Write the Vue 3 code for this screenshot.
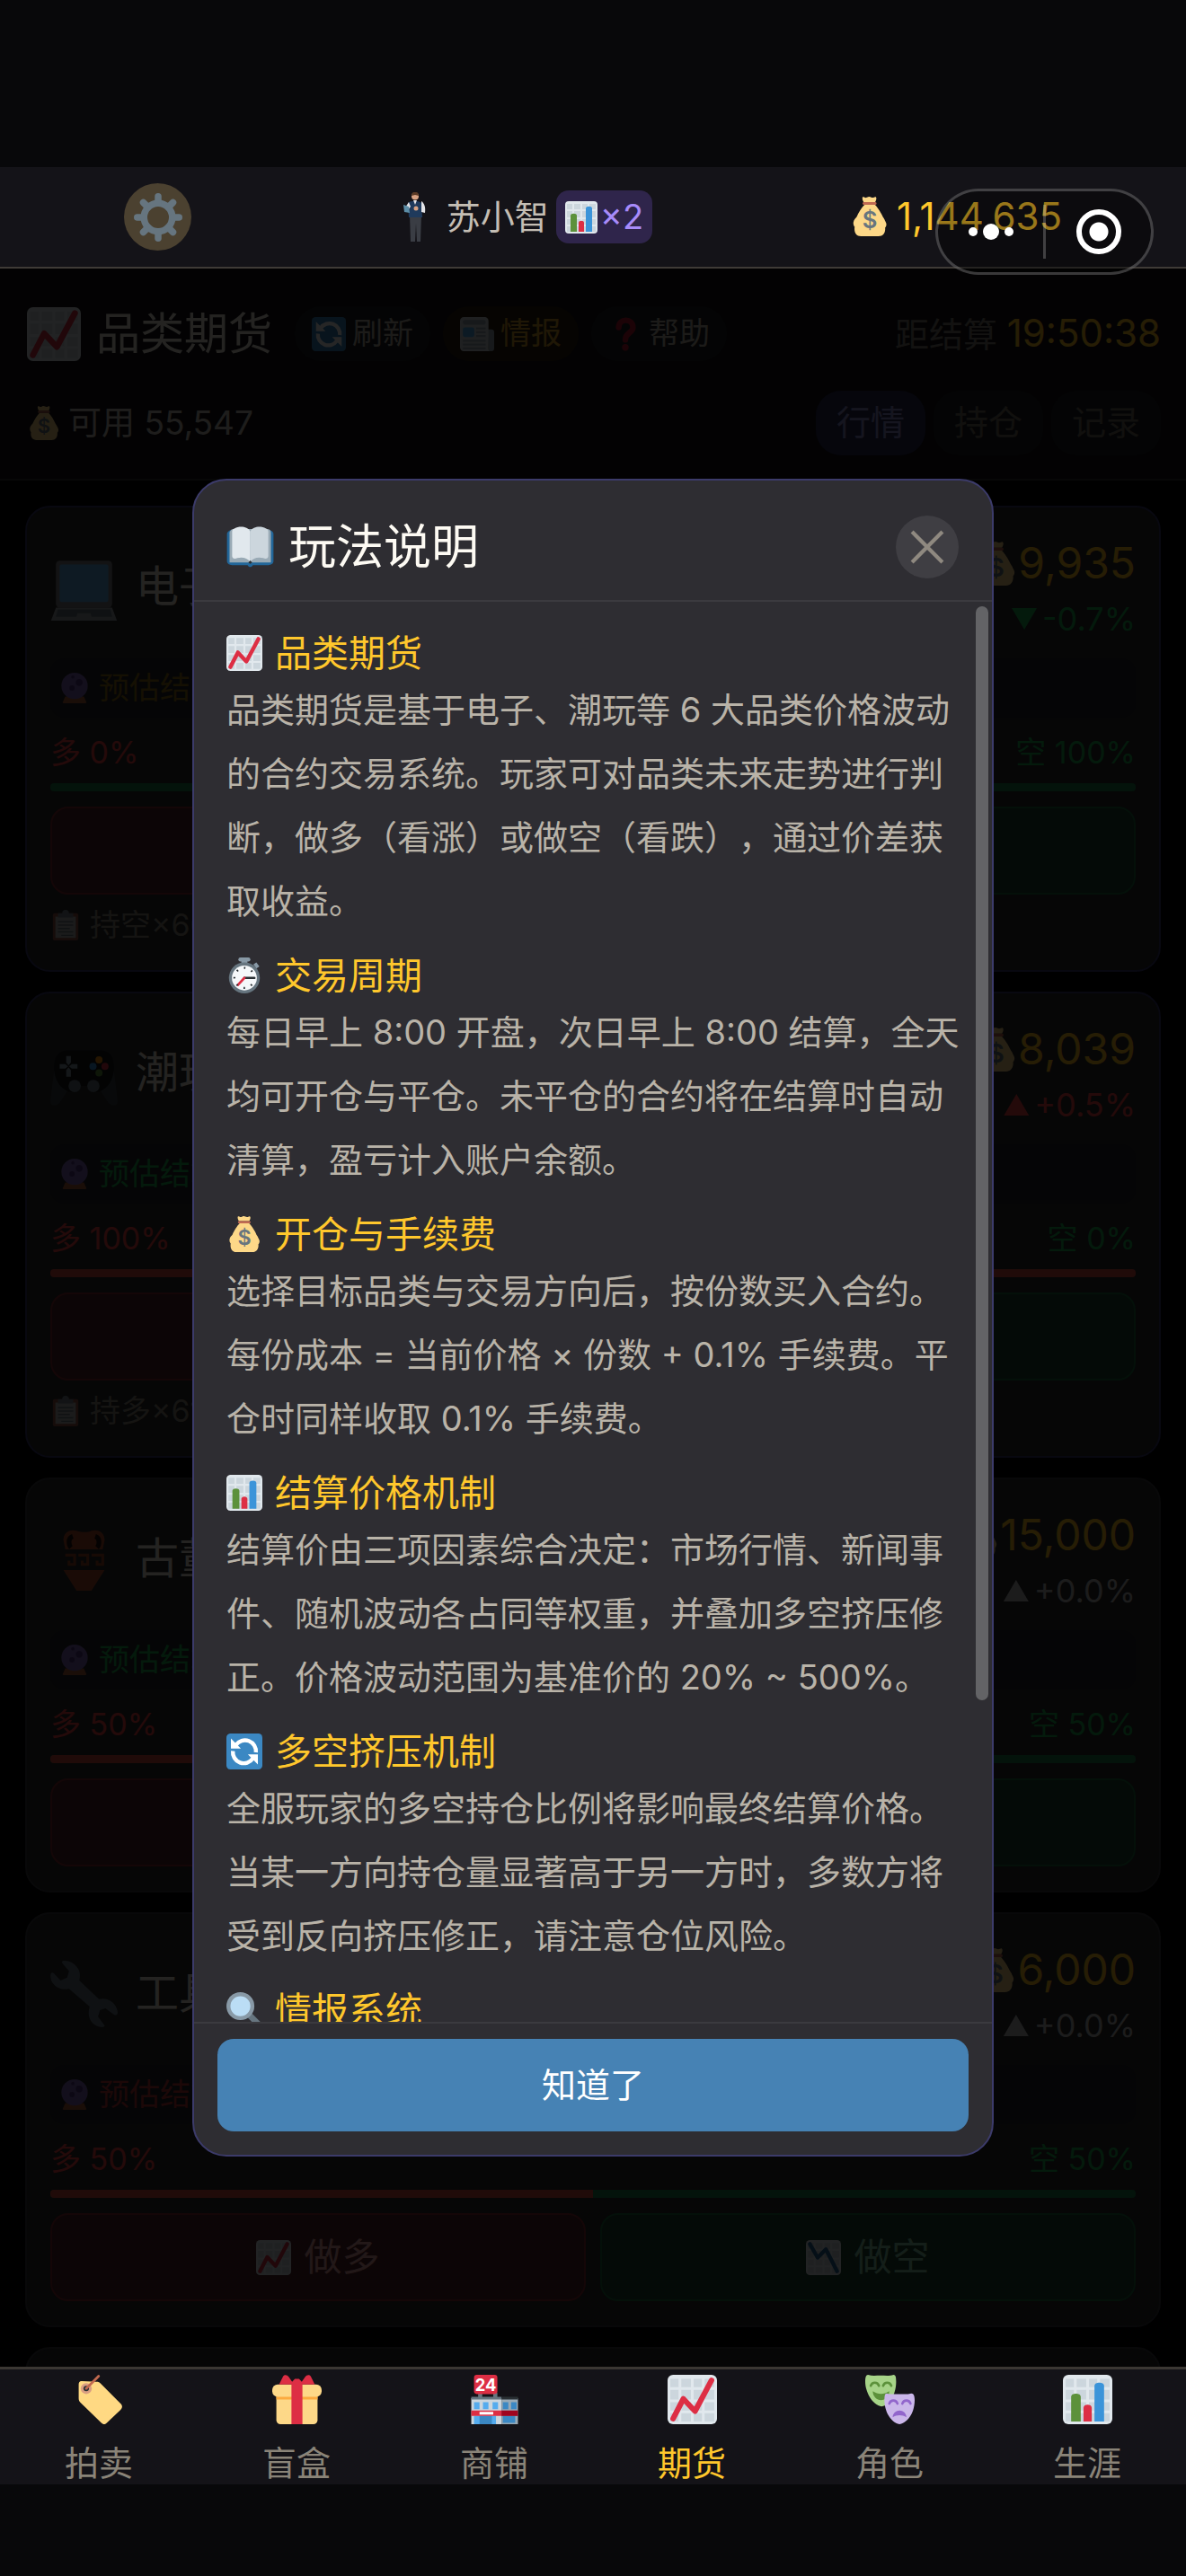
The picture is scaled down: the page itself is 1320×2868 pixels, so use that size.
<script setup>
import { ref } from 'vue'

const topActions = [
   { icon: 'refresh', label: '刷新', hot: false },
   { icon: 'news', label: '情报', hot: true },
   { icon: 'question', label: '帮助', hot: false },
]

const views = ['行情', '持仓', '记录']
const activeView = ref('行情')

// trend: up | down | flat, hint: colour of the forecast line
const contracts = [
   { name: '电子', icon: 'laptop', price: '9,935', trend: 'down', change: '-0.7%', hint: 'warn', long: 0, holding: '持空×60' },
   { name: '潮玩', icon: 'gamepad', price: '8,039', trend: 'up', change: '+0.5%', hint: 'down', long: 100, holding: '持多×61' },
   { name: '古董', icon: 'amphora', price: '15,000', trend: 'flat', change: '+0.0%', hint: 'down', long: 50, holding: '' },
   { name: '工具', icon: 'wrench', price: '6,000', trend: 'flat', change: '+0.0%', hint: 'up', long: 50, holding: '' },
]

const rules = [
   { icon: 'chart-up', title: '品类期货', text: '品类期货是基于电子、潮玩等 6 大品类价格波动的合约交易系统。玩家可对品类未来走势进行判断，做多（看涨）或做空（看跌），通过价差获取收益。' },
   { icon: 'stopwatch', title: '交易周期', text: '每日早上 8:00 开盘，次日早上 8:00 结算，全天均可开仓与平仓。未平仓的合约将在结算时自动清算，盈亏计入账户余额。' },
   { icon: 'bag', title: '开仓与手续费', text: '选择目标品类与交易方向后，按份数买入合约。每份成本 = 当前价格 × 份数 + 0.1% 手续费。平仓时同样收取 0.1% 手续费。' },
   { icon: 'bars', title: '结算价格机制', text: '结算价由三项因素综合决定：市场行情、新闻事件、随机波动各占同等权重，并叠加多空挤压修正。价格波动范围为基准价的 20% ~ 500%。' },
   { icon: 'refresh', title: '多空挤压机制', text: '全服玩家的多空持仓比例将影响最终结算价格。当某一方向持仓量显著高于另一方时，多数方将受到反向挤压修正，请注意仓位风险。' },
   { icon: 'magnifier', title: '情报系统', text: '' },
]

const tabs = [
   { icon: 'tag', label: '拍卖' },
   { icon: 'gift', label: '盲盒' },
   { icon: 'store', label: '商铺' },
   { icon: 'chart-up', label: '期货' },
   { icon: 'masks', label: '角色' },
   { icon: 'bars', label: '生涯' },
]
const activeTab = ref('期货')

const helpOpen = ref(true)
</script>

<template>
   <!-- icon sprite -->
   <svg class="sprite" aria-hidden="true">
      <symbol id="chart-up" viewBox="0 0 36 36">
         <rect width="36" height="36" rx="4" fill="#e1e8ed" />
         <path fill="#ccd6dd" d="M2 3h6v6H2zM10 3h7v6h-7zM19 3h6v6h-6zM27 3h7v6h-7zM2 11h6v7H2zM10 11h7v7h-7zM19 11h6v7h-6zM27 11h7v7h-7zM2 20h6v6H2zM10 20h7v6h-7zM19 20h6v6h-6zM27 20h7v6h-7zM2 28h6v6H2zM10 28h7v6h-7zM19 28h6v6h-6zM27 28h7v6h-7z" />
         <path d="M4 32 11.500 17.500 20 26.500 32 4" fill="none" stroke="#dd2e44" stroke-width="4" stroke-linecap="round" stroke-linejoin="round" />
      </symbol>
      <symbol id="chart-down" viewBox="0 0 36 36">
         <rect width="36" height="36" rx="4" fill="#e1e8ed" />
         <path fill="#ccd6dd" d="M2 3h6v6H2zM10 3h7v6h-7zM19 3h6v6h-6zM27 3h7v6h-7zM2 11h6v7H2zM10 11h7v7h-7zM19 11h6v7h-6zM27 11h7v7h-7zM2 20h6v6H2zM10 20h7v6h-7zM19 20h6v6h-6zM27 20h7v6h-7zM2 28h6v6H2zM10 28h7v6h-7zM19 28h6v6h-6zM27 28h7v6h-7z" />
         <path d="M4 4 12 18 20.500 9.500 32 32" fill="none" stroke="#226699" stroke-width="4" stroke-linecap="round" stroke-linejoin="round" />
      </symbol>
      <symbol id="bars" viewBox="0 0 36 36">
         <rect width="36" height="36" rx="4" fill="#e1e8ed" />
         <path fill="#ccd6dd" d="M2 3h6v6H2zM10 3h7v6h-7zM19 3h6v6h-6zM27 3h7v6h-7zM2 11h6v7H2zM10 11h7v7h-7zM19 11h6v7h-6zM27 11h7v7h-7zM2 20h6v6H2zM10 20h7v6h-7zM19 20h6v6h-6zM27 20h7v6h-7zM2 28h6v6H2zM10 28h7v6h-7zM19 28h6v6h-6zM27 28h7v6h-7z" />
         <path fill="#5c913b" d="M6 34V16c0-3 7-3 7 0v18z" />
         <path fill="#dd2e44" d="M15 34V24c0-3 6-3 6 0v10z" />
         <path fill="#3b94d9" d="M23 34V8c0-3 7-3 7 0v26z" />
      </symbol>
      <symbol id="bag" viewBox="0 0 36 36">
         <path fill="#fdd888" d="M31.900 21.900c-.4-1.500-1.200-2.400-1.800-3.300-1.500-3.500-4.600-8.700-7.300-11.300H13.300C10.600 9.900 7.600 14.900 6.100 18.400c-.6 1-2.700 2.200-3 5.100-.2 2.300.9 3.500 1.200 4-.8 4.500 1.100 8.500 5.700 8.500h16c4.500 0 6.500-3.600 6-7.800.5-.5 1.700-2.100.9-4.300-.3-.9-.8-1.600-1-2zM12.500 5c-1-1.500-1.700-4-.8-4.700 1.500-.6 1.700.9 3 .6 1.300-.2 1.300-.9 2.700-.9s1.900.9 3.200.9S22.500-.2 23.500.3c1.100.9.300 3.200-.6 4.700z" />
         <path fill="#bf6952" d="M12.500 4.900h10.700c1.300 0 1.300 2.400 0 2.400H12.500c-1.300 0-1.300-2.400 0-2.400z" />
         <text x="18" y="28.500" font-size="21" font-weight="600" text-anchor="middle" fill="#67757f">$</text>
      </symbol>
      <symbol id="refresh" viewBox="0 0 36 36">
         <rect width="36" height="36" rx="4" fill="#3b88c3" />
         <path d="M9.500 11.500A11 11 0 0 1 29.500 19M26.500 25A11 11 0 0 1 6.500 17.500" fill="none" stroke="#fff" stroke-width="4" />
         <path fill="#fff" d="M4.500 5v10h10zM31.500 31V21h-10z" />
      </symbol>
      <symbol id="news" viewBox="0 0 36 36">
         <path fill="#99aab5" d="M29 13h4a3 3 0 0 1 3 3v17a3 3 0 0 1-6 0z" />
         <path fill="#ccd6dd" d="M4 0h22a4 4 0 0 1 4 4v29a3 3 0 0 0 3 3H4a4 4 0 0 1-4-4V4a4 4 0 0 1 4-4z" />
         <rect x="3" y="3" width="24" height="5" rx="2" fill="#99aab5" />
         <rect x="3" y="11" width="12" height="10" rx="2" fill="#55acee" />
         <path d="M17 12h10M17 16h10M17 20h10M3 25h24M3 29h24M3 33h24" stroke="#99aab5" stroke-width="2" />
      </symbol>
      <symbol id="question" viewBox="0 0 36 36">
         <path d="M11 11c0-10 15-10 15 0 0 6-8 5-8 13" fill="none" stroke="#be1931" stroke-width="6" stroke-linecap="round" />
         <circle cx="18" cy="32" r="3.500" fill="#be1931" />
      </symbol>
      <symbol id="laptop" viewBox="0 0 36 36">
         <rect x="3" y="4" width="30" height="25" rx="2" fill="#808285" />
         <rect x="5" y="6" width="26" height="20" rx="1" fill="#5dadec" />
         <path fill="#99a0a6" d="M3 29h30l3 8H0z" />
         <path fill="#66757f" d="M4 30h28l1 4H3z" />
         <path fill="#99a0a6" d="M14.500 32h7l1 4h-9zM0 37h36v2H0z" />
      </symbol>
      <symbol id="gamepad" viewBox="0 0 36 36">
         <path fill="#3b4045" d="M2 17 0 33c0 3 3 3 5 1l6-9zM34 17l2 16c0 3-3 3-5 1l-6-9z" />
         <path fill="#14171a" d="M9 6h18c5 0 7 4 7 9s-2 10-6 12c-3 2-6 2-8-2h-4c-2 4-5 4-8 2-4-2-6-7-6-12s2-9 7-9z" />
         <path fill="#8899a6" d="M8.500 9h2.500v3.500L9.700 14l-1.200-1.500zM8.500 20H11v-3.500L9.700 15l-1.200 1.500zM5 13.300h3l1.500 1.200L8 15.700H5zM14.500 13.300h-3L10 14.500l1.500 1.200h3z" />
         <circle cx="13" cy="25" r="3.300" fill="#66757f" /><circle cx="23" cy="25" r="3.300" fill="#66757f" />
         <circle cx="26" cy="11" r="1.900" fill="#f4900c" /><circle cx="29.200" cy="14.500" r="1.900" fill="#dd2e44" />
         <circle cx="22.800" cy="14.500" r="1.900" fill="#3b94d9" /><circle cx="26" cy="18" r="1.900" fill="#5c913b" />
      </symbol>
      <symbol id="amphora" viewBox="0 0 36 36">
         <path fill="#ae4e2a" d="M14 3c3 1 6 1 8 0 4-1 7 1 7 5l-1 5H8L7 8c0-4 3-6 7-5zM7 24h22l-7 11h-8z" />
         <path d="M12 6c-3 1-2 5-1 6M24 6c3 1 2 5 1 6" fill="none" stroke="#1c1210" stroke-width="2.500" />
         <path d="M8 16h5v5h-3v-2M15 16h5v5h-3v-2M22 16h6v5h-3v-2" fill="none" stroke="#9a4525" stroke-width="1.500" />
      </symbol>
      <symbol id="wrench" viewBox="0 0 36 36">
         <path fill="#66757f" d="M7 .5C10 0 14 2 15.500 6c.5 2 .3 3.500 0 5l10.500 10c4-1 8 1 9.500 5 .6 1.700.6 2.500.2 3.200-.5.600-1.500.3-2.200-.3l-4-3-3 1-1 3.500 3 4c1 1 .5 1.600-1 1.600-4-.3-7-3.500-7-7.500 0-1.500.3-2.500.5-3.500L10 15.500c-4 1-8-1-9.500-4.500C0 9.300 0 8 .3 7.300c.3-.7 1-.6 1.700 0L5.500 11 9 9.500 10 6 7 2.500C6 1.500 6 .8 7 .5z" />
      </symbol>
      <symbol id="crystal" viewBox="0 0 36 36">
         <path fill="#ae5f3a" d="M7 28h22l3 7c0 1-1 1-2 1H6c-1 0-2 0-2-1z" />
         <circle cx="18" cy="15.500" r="15.500" fill="#8168b8" />
         <circle cx="23.500" cy="11.500" r="4" fill="#553986" /><circle cx="15" cy="18" r="3.200" fill="#553986" /><circle cx="16" cy="5" r="2" fill="#553986" />
      </symbol>
      <symbol id="clipboard" viewBox="0 0 36 36">
         <rect x="3" y="4" width="30" height="32" rx="2" fill="#c1694f" />
         <path fill="#f0f0ee" d="M6 8h24v25H6z" />
         <path fill="#99aab5" d="M9 4h5a4 4 0 0 1 8 0h5v5H9z" />
         <path d="M9 14h18M9 18h18M9 22h14M9 26h18M13 30h14" stroke="#8899a6" stroke-width="1.500" />
      </symbol>
      <symbol id="book" viewBox="0 0 36 32">
         <path fill="#226699" d="M0 6c0-2 2-3 4-3h28c2 0 4 1 4 3v21c0 2-2 3-4 3H20c-1 2-3 2-4 0H4c-2 0-4-1-4-3z" />
         <path fill="#99aab5" d="M2 5c0-2 2-3 3-3h26c2 0 3 1 3 3v23H2z" />
         <path fill="#e1e8ed" d="M18 4C16-.5 9-.3 6 1.500 4.500 2 4 3 4 4v19c0 2 2 2.500 4 1.500 4-1 8 0 10 3z" />
         <path fill="#ccd6dd" d="M18 4c2-4.500 9-4.300 12-2.500 1.500.5 2 1.500 2 2.500v19c0 2-2 2.500-4 1.500-4-1-8 0-10 3z" />
         <path fill="#292f33" d="m16.500 28 1.500-1.500 1.500 1.500-1.500 1z" />
      </symbol>
      <symbol id="stopwatch" viewBox="0 0 36 36">
         <path fill="#8899a6" d="M15 3h6v5h-6zM27 7l3-2 3 4-3 2z" />
         <rect x="12" width="12" height="4" rx="2" fill="#8899a6" />
         <circle cx="18" cy="20.500" r="15.500" fill="#66757f" />
         <circle cx="18" cy="20.500" r="12.500" fill="#f5f8fa" />
         <path d="M18 20.500h10" stroke="#292f33" stroke-width="2.200" stroke-linecap="round" />
         <path d="m18 20.500-6.500 7" stroke="#dd2e44" stroke-width="2.400" stroke-linecap="round" />
         <circle cx="18" cy="20.500" r="10" fill="none" stroke="#292f33" stroke-width="2" stroke-dasharray="1.500 6.354" stroke-dashoffset=".75" />
      </symbol>
      <symbol id="magnifier" viewBox="0 0 36 36">
         <path d="m24 24 9 9" stroke="#66757f" stroke-width="6" stroke-linecap="round" />
         <circle cx="14" cy="14" r="12" fill="#bbddf5" stroke="#8899a6" stroke-width="4" />
      </symbol>
      <symbol id="tag" viewBox="0 0 36 36">
         <path fill="#ffd983" d="M3 7c0-1.500.7-2.500 2-2.500L16 5c1.500 0 2 .3 3 1.300L33.500 21c1.500 1.500 1.500 3 0 4.500L23.500 35c-1.500 1.500-2.500 1.300-4 0L4.500 20.500C3.300 19.300 3 18.500 3 17z" />
         <circle cx="8.500" cy="10" r="4" fill="#d99e82" /><circle cx="8.500" cy="10" r="2" fill="#292f33" />
         <path d="m8.500 10 9-9" stroke="#c1694f" stroke-width="1.800" stroke-linecap="round" />
      </symbol>
      <symbol id="gift" viewBox="0 0 36 36">
         <path fill="#fdd888" d="M3 14h30v19a3 3 0 0 1-3 3H6a3 3 0 0 1-3-3z" />
         <path fill="#fcab40" d="M3 15h30v3H3z" />
         <rect y="7" width="36" height="9" rx="4" fill="#fdd888" />
         <path fill="#dd2e44" d="M14 7h8v29h-8zM5 7l3-6c1-1.500 3-1 4 .5L14.500 5l2-2h3l2 2L24 1.500C25 0 27-.5 28 1l3 6z" />
      </symbol>
      <symbol id="store" viewBox="0 0 36 36">
         <path fill="#66757f" d="M6 13h3v5H6zM17 13h3v5h-3z" />
         <rect x="3" width="17" height="14" rx="2" fill="#dd2e44" />
         <text x="11.500" y="11.500" font-size="12" font-weight="700" text-anchor="middle" fill="#fff">24</text>
         <path fill="#ccd6dd" d="M1 17h22v19H1z" /><path fill="#99aab5" d="M23 17h12v19H23z" />
         <path fill="#66757f" d="M1 16h22v2H1z" /><path fill="#292f33" d="M23 16h12v2H23z" />
         <path fill="#55acee" d="M3 20h4v5H3zM9.500 20h4v5h-4zM16.500 20h4v5h-4zM3 30h16v6H3z" />
         <path fill="#3b88c3" d="M7 30h9v6H7zM24 20h4v5h-4zM30 20h4v5h-4zM24 30h9v5h-9z" />
         <path fill="#dd2e44" d="M1 26h22v4H1z" /><path fill="#a0041e" d="M23 26h12v4H23z" />
         <rect x="7" y="27" width="10" height="2" fill="#fff" />
      </symbol>
      <symbol id="masks" viewBox="0 0 36 36">
         <path fill="#a6d388" d="M2 0c3 1 6 .5 9 .5S18 1 20.500 0c1.800 0 2 2 2 5 0 8-4 17-10.500 18C5 22 0 12 0 5c0-3 .5-5 2-5z" />
         <path d="M4 8c1-3 5-3 6 0M13 8c1-3 5-3 6 0" fill="none" stroke="#5c913b" stroke-width="1.700" stroke-linecap="round" />
         <path fill="#5c913b" d="M5.500 12c4 2.500 8 2.500 12 0 0 4-3 6.500-6 6.500s-6-2.500-6-6.500z" />
         <path fill="#cbb7ea" d="M15.500 13.500c3 1 6 .5 9 .5s6 .5 9-.5c2 0 2.500 2 2.500 5 0 8-4 16-11 17.500C18 34.500 14 26 14 18.500c0-3 .3-5 1.500-5z" />
         <path d="M17.500 21c1-3 5-3 6 0M27 21c1-3 5-3 6 0" fill="none" stroke="#9266cc" stroke-width="1.700" stroke-linecap="round" />
         <path fill="#9266cc" d="M20 31c0-3 2.500-5 5-5s5 2 5 5c-3-2-7-2-10 0z" />
      </symbol>
      <symbol id="gear" viewBox="0 0 36 36">
         <circle cx="18" cy="18" r="10.500" fill="none" stroke="#66757f" stroke-width="5" />
         <path d="M18 2.500V7M18 29v4.500M2.500 18H7M29 18h4.500M7 7l3.500 3.500M25.500 25.500 29 29M29 7l-3.500 3.500M10.500 25.500 7 29" stroke="#66757f" stroke-width="5" stroke-linecap="round" />
      </symbol>
      <symbol id="player" viewBox="0 0 56 56">
         <path fill="#3a3d44" d="m23 26 13 0-1 29h-4l-1-20-1 20h-5z" />
         <path fill="#1f3a5c" d="M21 12c3-3 12-3 15 0l1 16H22z" />
         <path fill="#e4e4e8" d="M36 10c3 2 5 6 4 13l-4-1zM22 11l-4 6 3 3 3-4zM27 9h4l-2 5z" />
         <circle cx="29" cy="4.500" r="4" fill="#d8a384" /><path fill="#5a3a26" d="M25 4c0-6 8-6 8 0l-4-1z" />
         <path fill="#5c8da6" d="m16 14 6 2 1 7-6-1z" /><circle cx="30" cy="18" r="2.500" fill="#d8a384" />
      </symbol>
   </svg>

   <div class="app">
      <header class="status">
         <button class="settings" aria-label="设置"><svg><use href="#gear" /></svg></button>
         <div class="player">
            <svg class="avatar"><use href="#player" /></svg>
            <span>苏小智</span>
            <span class="boost"><svg><use href="#bars" /></svg>×2</span>
         </div>
         <div class="coins"><svg><use href="#bag" /></svg>1,144,635</div>

         <!-- host app capsule, floats over the coin balance -->
         <div class="capsule">
            <button class="capsule-more" aria-label="更多"><i /><i /><i /></button>
            <button class="capsule-close" aria-label="关闭"><i /></button>
         </div>
      </header>

      <main class="market">
         <section class="market-head">
            <div class="head-row">
               <div class="head-left">
                  <svg class="head-icon"><use href="#chart-up" /></svg>
                  <h1>品类期货</h1>
                  <div class="pills">
                     <button v-for="a in topActions" :key="a.label" class="pill" :class="{ hot: a.hot }">
                        <svg><use :href="`#${a.icon}`" /></svg>{{ a.label }}
                     </button>
                  </div>
               </div>
               <div class="countdown">距结算 <b>19:50:38</b></div>
            </div>
            <div class="head-row">
               <div class="available"><svg><use href="#bag" /></svg>可用 55,547</div>
               <div class="views">
                  <button
                     v-for="v in views"
                     :key="v"
                     class="view"
                     :class="{ active: v === activeView }"
                     @click="activeView = v"
                  >{{ v }}</button>
               </div>
            </div>
         </section>

         <section class="list">
            <article v-for="c in contracts" :key="c.name" class="card" :class="{ held: c.holding }">
               <div class="card-top">
                  <svg class="card-icon"><use :href="`#${c.icon}`" /></svg>
                  <h2>{{ c.name }}</h2>
                  <div class="quote">
                     <div class="price"><svg><use href="#bag" /></svg>{{ c.price }}</div>
                     <div class="change" :class="c.trend"><i />{{ c.change }}</div>
                  </div>
               </div>
               <div class="forecast" :class="c.hint"><svg><use href="#crystal" /></svg>预估结算</div>
               <div class="ratio">
                  <span class="up">多 {{ c.long }}%</span>
                  <span class="down">空 {{ 100 - c.long }}%</span>
               </div>
               <div class="ratio-bar"><i :style="{ width: c.long + '%' }" /></div>
               <div class="trade">
                  <button class="buy"><svg><use href="#chart-up" /></svg>做多</button>
                  <button class="sell"><svg><use href="#chart-down" /></svg>做空</button>
               </div>
               <div v-if="c.holding" class="holding"><svg><use href="#clipboard" /></svg>{{ c.holding }}</div>
            </article>
            <article class="card next" />
         </section>

         <!-- help dialog -->
         <div v-if="helpOpen" class="overlay">
            <div class="dialog" role="dialog" aria-labelledby="help-title">
               <div class="dialog-head">
                  <svg class="dialog-icon"><use href="#book" /></svg>
                  <h2 id="help-title">玩法说明</h2>
                  <button class="close" aria-label="关闭" @click="helpOpen = false">
                     <svg viewBox="0 0 36 36"><path d="m2 2 32 32M34 2 2 34" /></svg>
                  </button>
               </div>
               <div class="dialog-body">
                  <section v-for="r in rules" :key="r.title" class="rule">
                     <h3><svg><use :href="`#${r.icon}`" /></svg>{{ r.title }}</h3>
                     <p v-if="r.text">{{ r.text }}</p>
                  </section>
                  <div class="thumb" />
               </div>
               <div class="dialog-foot">
                  <button class="confirm" @click="helpOpen = false">知道了</button>
               </div>
            </div>
         </div>
      </main>

      <nav class="tabs">
         <a
            v-for="t in tabs"
            :key="t.label"
            href="#"
            :class="{ active: t.label === activeTab }"
            @click.prevent="activeTab = t.label"
         >
            <svg><use :href="`#${t.icon}`" /></svg>
            {{ t.label }}
         </a>
      </nav>
   </div>
</template>

<style>
body {
   margin: 0;
   background: #08080a;
}
</style>

<style scoped>
.sprite {
   position: absolute;
   width: 0;
   height: 0;
}

.app {
   box-sizing: border-box;
   height: 100vh;
   padding: 186px 0 102px;
   display: flex;
   flex-direction: column;
   font-family: Inter, "Noto Sans CJK SC", sans-serif;
   font-size: 38px;
   line-height: 1.2;
   color: #c4beb4;
   text-spacing-trim: space-all;
}

.app * {
   box-sizing: border-box;
}

h1, h2, h3, p {
   margin: 0;
   font-weight: 400;
}

button {
   font: inherit;
   color: inherit;
   border: none;
   padding: 0;
   cursor: pointer;
}

svg {
   flex-shrink: 0;
}

/* ── Status bar ── */
.status {
   position: relative;
   z-index: 2;
   flex-shrink: 0;
   height: 113px;
   padding: 0 138px;
   display: flex;
   align-items: center;
   justify-content: space-between;
   background: #141318;
   border-bottom: 2px solid #3f3b37;
}

.settings {
   width: 75px;
   height: 75px;
   border-radius: 50%;
   background: #4b4130;
   display: flex;
   align-items: center;
   justify-content: center;
}

.settings svg {
   width: 54px;
   height: 54px;
}

.player {
   display: flex;
   align-items: center;
   gap: 8px;
}

.avatar {
   width: 56px;
   height: 56px;
}

.boost {
   display: flex;
   align-items: center;
   gap: 3px;
   height: 59px;
   padding: 0 10px;
   border-radius: 14px;
   background: #2f254b;
   color: #a78bfa;
}

.boost svg {
   width: 36px;
   height: 36px;
}

.coins {
   display: flex;
   align-items: center;
   gap: 8px;
   font-size: 42px;
   color: #ffc72c;
}

.coins svg {
   width: 44px;
   height: 44px;
}

.capsule {
   position: absolute;
   top: 24px;
   right: 36px;
   width: 243px;
   height: 96px;
   display: flex;
   align-items: center;
   border: 3px solid rgba(255, 255, 255, 0.22);
   border-radius: 48px;
   background: rgba(0, 0, 0, 0.4);
}

.capsule button {
   flex: 1;
   height: 60px;
   background: none;
   display: flex;
   align-items: center;
   justify-content: center;
   gap: 6px;
}

.capsule-more i {
   width: 10px;
   height: 10px;
   border-radius: 50%;
   background: #fff;
}

.capsule-more i:nth-child(2) {
   width: 18px;
   height: 18px;
}

.capsule .capsule-close {
   border-left: 3px solid rgba(255, 255, 255, 0.22);
}

.capsule-close i {
   width: 50px;
   height: 50px;
   border: 6px solid #fff;
   border-radius: 50%;
   background: radial-gradient(circle, #fff 10px, transparent 11px);
}

/* ── Market ── */
.market {
   position: relative;
   flex: 1;
   min-height: 0;
   overflow: hidden;
   background: #000;
}

.market-head {
   padding: 42px 28px 26px 30px;
   display: flex;
   flex-direction: column;
   gap: 33px;
   background: #141318;
   border-bottom: 2px solid #303034;
}

.head-row,
.head-left,
.pills,
.views,
.available {
   display: flex;
   align-items: center;
}

.head-row {
   justify-content: space-between;
}

.head-icon {
   width: 60px;
   height: 60px;
   margin-right: 17px;
}

h1 {
   font-size: 49px;
   line-height: 61px;
   color: #efe9df;
}

.pills {
   margin-left: 25px;
   gap: 14px;
}

.pill {
   height: 61px;
   padding: 0 19px;
   display: flex;
   align-items: center;
   gap: 7px;
   border-radius: 30px;
   background: #1e1e22;
   font-size: 34px;
   color: #b9b3a8;
}

.pill svg {
   width: 38px;
   height: 38px;
}

.pill.hot {
   background: #2c1f0e;
   color: #d09c28;
}

.countdown {
   color: #807a70;
}

.countdown b {
   font-size: 42px;
   font-weight: 400;
   color: #fbbf24;
}

.available {
   gap: 8px;
   font-size: 37px;
   color: #c9c3b8;
}

.available svg {
   width: 38px;
   height: 38px;
}

.views {
   gap: 9px;
}

.view {
   height: 72px;
   padding: 0 23px;
   border-radius: 28px;
   background: #1e1e22;
   color: #706b62;
}

.view.active {
   background: #282855;
   color: #9090cc;
}

/* ── Contract cards ── */
.list {
   padding: 28px;
   display: flex;
   flex-direction: column;
   gap: 22px;
}

.card {
   padding: 26px 26px 27px;
   border: 2px solid #3a3a3e;
   border-radius: 28px;
   background: #28282b;
}

.card.held {
   border-color: #35356b;
}

.card.next {
   height: 462px;
}

.card-top {
   height: 124px;
   display: flex;
   align-items: center;
}

.card-icon {
   width: 75px;
   height: 75px;
   margin-right: 20px;
   overflow: visible;
}

.card-top h2 {
   font-size: 48px;
   color: #efe9df;
}

.quote {
   margin-left: auto;
   display: flex;
   flex-direction: column;
   align-items: flex-end;
}

.price {
   display: flex;
   align-items: center;
   line-height: 72px;
   font-size: 48px;
   color: #fbbf24;
}

.price svg {
   width: 49px;
   height: 49px;
}

.change {
   display: flex;
   align-items: center;
   gap: 6px;
   font-size: 36px;
   line-height: 52px;
}

.change i {
   width: 28px;
   height: 24px;
   background: currentColor;
   clip-path: polygon(50% 0, 100% 100%, 0 100%);
}

.change.down i {
   clip-path: polygon(0 0, 100% 0, 50% 100%);
}

.up {
   color: #ef4444;
}

.down {
   color: #1fae54;
}

.flat {
   color: #b9b9b9;
}

.warn {
   color: #8c6c18;
}

.forecast {
   height: 66px;
   margin-top: 18px;
   padding: 0 10px;
   display: flex;
   align-items: center;
   gap: 10px;
   border-radius: 16px;
   background: #242428;
   font-size: 34px;
}

.forecast svg {
   width: 34px;
   height: 34px;
}

.forecast.up {
   color: #b83838;
}

.ratio {
   margin: 16px 0 11px;
   display: flex;
   justify-content: space-between;
   font-size: 34px;
   line-height: 46px;
}

.ratio-bar {
   height: 9px;
   border-radius: 4px;
   overflow: hidden;
   background: #1c7f4a;
}

.ratio-bar i {
   display: block;
   height: 100%;
   background: #d84a40;
}

.trade {
   margin-top: 17px;
   display: flex;
   gap: 16px;
}

.trade button {
   flex: 1;
   height: 98px;
   display: flex;
   align-items: center;
   justify-content: center;
   gap: 14px;
   border-radius: 20px;
   font-size: 42px;
}

.trade svg {
   width: 39px;
   height: 39px;
}

.trade .buy {
   background: #522428;
   border: 2px solid #862c30;
   color: #e0a0a0;
}

.trade .sell {
   background: #1c4230;
   border: 2px solid #1c6a40;
   color: #88c8a8;
}

.holding {
   height: 46px;
   margin-top: 11px;
   display: flex;
   align-items: center;
   gap: 10px;
   font-size: 34px;
   color: #8a857c;
}

.holding svg {
   width: 34px;
   height: 34px;
   opacity: 0.7;
}

/* ── Help dialog ── */
.overlay {
   position: absolute;
   inset: 0;
   display: flex;
   align-items: center;
   justify-content: center;
   background: rgba(0, 0, 0, 0.85);
}

.dialog {
   width: 892px;
   max-width: 90%;
   height: 80%;
   display: flex;
   flex-direction: column;
   border: 2px solid #3c3b6a;
   border-radius: 38px;
   background: #2e2d32;
   overflow: hidden;
}

.dialog-head {
   height: 135px;
   flex-shrink: 0;
   padding: 16px 37px 0 36px;
   display: flex;
   align-items: center;
   gap: 16px;
   border-bottom: 2px solid #3b3a3f;
}

.dialog-icon {
   width: 53px;
   height: 46px;
}

.dialog-head h2 {
   font-size: 53px;
   line-height: 70px;
   color: #fdfaf3;
}

.close {
   width: 70px;
   height: 70px;
   margin-left: auto;
   border-radius: 50%;
   background: #3f3e43;
   display: flex;
   align-items: center;
   justify-content: center;
}

.close svg {
   width: 38px;
   height: 38px;
   stroke: #8f8980;
   stroke-width: 4;
}

.dialog-body {
   position: relative;
   flex: 1;
   min-height: 0;
   padding: 30px 28px 0 36px;
   overflow: hidden;
}

.rule {
   margin-bottom: 20px;
}

.rule h3 {
   display: flex;
   align-items: center;
   gap: 14px;
   font-size: 41px;
   line-height: 55px;
   color: #ffc72c;
}

.rule h3 svg {
   width: 40px;
   height: 40px;
}

.rule p {
   line-height: 71px;
   color: #b9b3a8;
}

.thumb {
   position: absolute;
   top: 5px;
   right: 4px;
   width: 14px;
   height: 77%;
   border-radius: 7px;
   background: #636366;
}

.dialog-foot {
   flex-shrink: 0;
   padding: 17px 26px 26px;
   border-top: 2px solid #3b3a3f;
}

.confirm {
   width: 100%;
   height: 103px;
   border-radius: 18px;
   background: #4682b4;
   color: #fff;
}

/* ── Bottom tabs ── */
.tabs {
   flex-shrink: 0;
   height: 131px;
   display: flex;
   background: #141318;
   border-top: 3px solid #3b3733;
}

.tabs a {
   flex: 1;
   display: flex;
   flex-direction: column;
   align-items: center;
   padding-top: 6px;
   gap: 16px;
   line-height: 55px;
   color: #8a8478;
   text-decoration: none;
}

.tabs a.active {
   color: #ffc72c;
}

.tabs svg {
   width: 55px;
   height: 55px;
}
</style>
